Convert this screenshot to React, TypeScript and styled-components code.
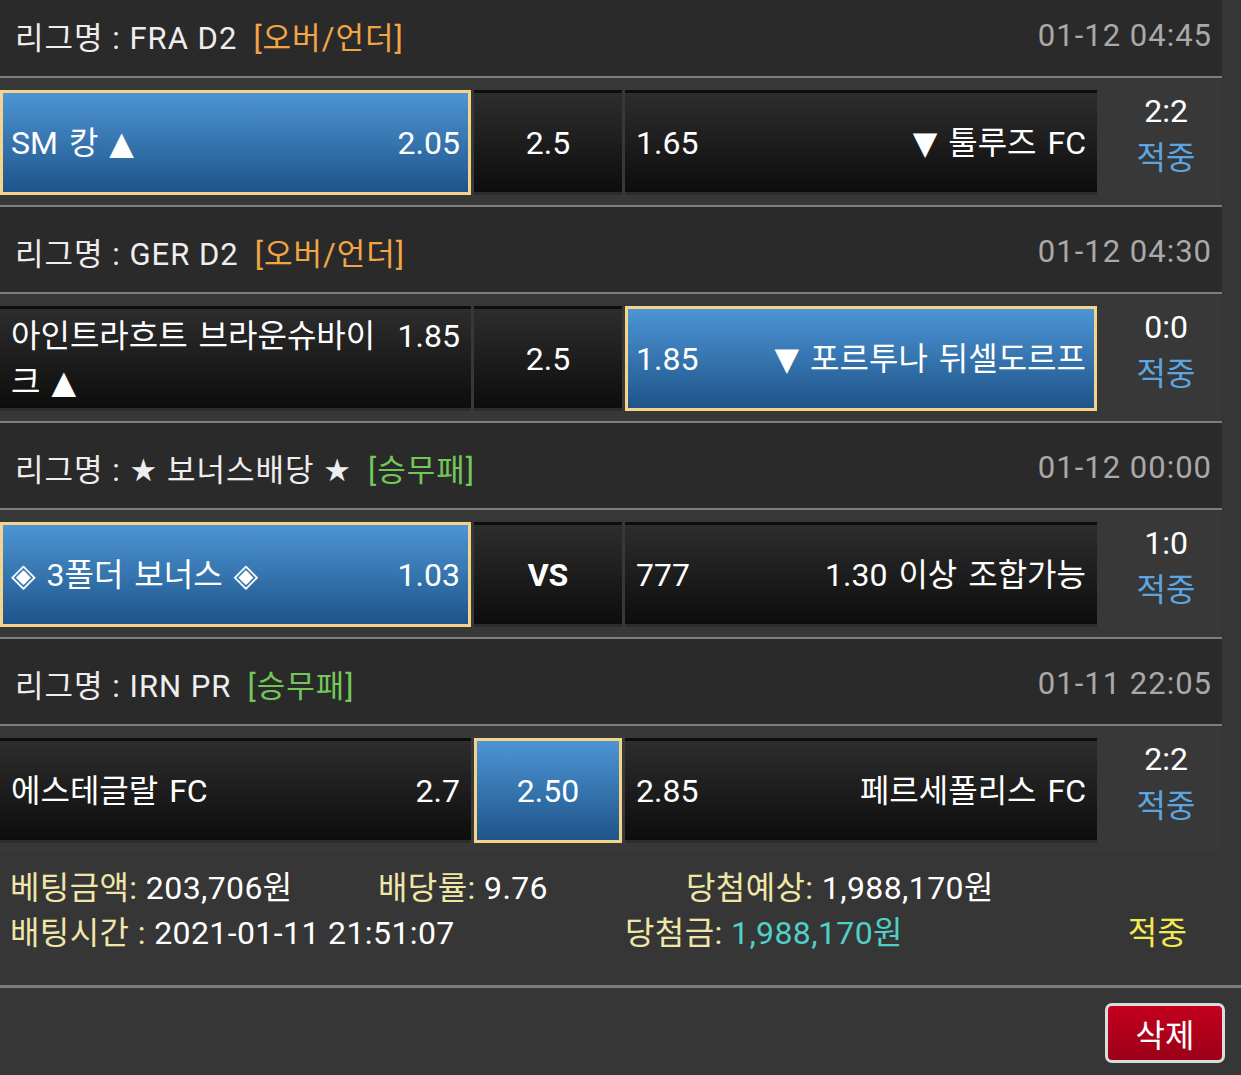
import styled, { createGlobalStyle } from "styled-components";

const FONT = `Roboto, "DejaVu Sans", "Noto Sans CJK KR", sans-serif`;

const GlobalStyle = createGlobalStyle`
  body {
    margin: 0;
    background: #363636;
    font-family: ${FONT};
    color: #fff;
    overflow: hidden;
  }
`;

const Page = styled.div`
  width: 1241px;
  height: 1075px;
  overflow: hidden;
`;

const List = styled.div`
  width: 1222px;
  margin-top: -9px;
`;

const Header = styled.div`
  height: 87px;
  box-sizing: border-box;
  display: flex;
  align-items: center;
  justify-content: space-between;
  padding: 3px 10px 0 15px;
  background: #2a2a2a;
  border-bottom: 2px solid #7d7d7d;
  font-size: 31px;
  letter-spacing: 1px;
`;

const League = styled.div`
  color: #eee;
`;

const Tag = styled.span<{ $color: string }>`
  margin-left: 16px;
  color: ${(p) => p.$color};
`;

const When = styled.div`
  color: #a9a9a9;
`;

const MatchRow = styled.div<{ $last?: boolean }>`
  display: grid;
  grid-template-columns: 471px 148px 472px 1fr;
  column-gap: 3px;
  padding: 12px 0 10px;
  background: #383838;
  border-bottom: ${(p) => (p.$last ? "none" : "2px solid #7d7d7d")};
`;

const Cell = styled.div<{ $on?: boolean }>`
  height: 105px;
  box-sizing: border-box;
  display: flex;
  align-items: center;
  justify-content: center;
  padding: 0 8px;
  border: 3px solid ${(p) => (p.$on ? "#f3d48a" : "transparent")};
  background: ${(p) =>
    p.$on
      ? "linear-gradient(#4d95d5, #1e5489)"
      : "linear-gradient(#2d2d2d, #0d0d0d)"};
  font-size: 32px;
  line-height: 46px;
`;

const Line = styled.div`
  width: 100%;
  display: flex;
  align-items: flex-start;
  justify-content: space-between;
`;

const Name = styled.span`
  max-width: 400px;
  word-spacing: 3px;
`;

const Odds = styled.span`
  flex-shrink: 0;
`;

const Center = styled.span<{ $bold?: boolean }>`
  font-weight: ${(p) => (p.$bold ? 700 : 400)};
`;

const Score = styled.div`
  display: flex;
  flex-direction: column;
  align-items: center;
  justify-content: flex-start;
  margin-top: -2px;
  padding-left: 10px;
  font-size: 32px;
  line-height: 47px;
`;

const Hit = styled.span<{ $color: string }>`
  color: ${(p) => p.$color};
`;

const Summary = styled.div`
  padding: 13px 26px 29px 10px;
  border-bottom: 3px solid #7d7d7d;
  font-size: 32px;
  line-height: 45px;
  letter-spacing: 0.4px;
`;

const SumRow = styled.div<{ $cols: string }>`
  display: grid;
  grid-template-columns: ${(p) => p.$cols};
  white-space: nowrap;
`;

const Label = styled.span`
  color: #efe6a8;
`;

const Value = styled.span<{ $color?: string }>`
  color: ${(p) => p.$color ?? "#fff"};
`;

const Verdict = styled.span`
  color: #f3ea4e;
  text-align: center;
`;

const Actions = styled.div`
  display: flex;
  justify-content: flex-end;
  padding: 15px 16px 0 0;
`;

const DeleteButton = styled.button`
  width: 120px;
  height: 60px;
  border: 3px solid #dcdcdc;
  border-radius: 7px;
  background: linear-gradient(#c4001f, #9b0018);
  color: #fff;
  font-family: ${FONT};
  font-size: 32px;
  padding: 0;
`;

type Match = {
  league: string;
  tag: string;
  tagColor: string;
  time: string;
  home: string;
  homeOdds: string;
  mid: string;
  awayOdds: string;
  away: string;
  pick: "home" | "mid" | "away";
  score: string;
};

const ORANGE = "#f2a545";
const GREEN = "#72c75a";

const matches: Match[] = [
  {
    league: "FRA D2",
    tag: "[오버/언더]",
    tagColor: ORANGE,
    time: "01-12 04:45",
    home: "SM 캉 ▲",
    homeOdds: "2.05",
    mid: "2.5",
    awayOdds: "1.65",
    away: "▼ 툴루즈 FC",
    pick: "home",
    score: "2:2",
  },
  {
    league: "GER D2",
    tag: "[오버/언더]",
    tagColor: ORANGE,
    time: "01-12 04:30",
    home: "아인트라흐트 브라운슈바이크 ▲",
    homeOdds: "1.85",
    mid: "2.5",
    awayOdds: "1.85",
    away: "▼ 포르투나 뒤셀도르프",
    pick: "away",
    score: "0:0",
  },
  {
    league: "★ 보너스배당 ★",
    tag: "[승무패]",
    tagColor: GREEN,
    time: "01-12 00:00",
    home: "◈ 3폴더 보너스 ◈",
    homeOdds: "1.03",
    mid: "VS",
    awayOdds: "777",
    away: "1.30 이상 조합가능",
    pick: "home",
    score: "1:0",
  },
  {
    league: "IRN PR",
    tag: "[승무패]",
    tagColor: GREEN,
    time: "01-11 22:05",
    home: "에스테글랄 FC",
    homeOdds: "2.7",
    mid: "2.50",
    awayOdds: "2.85",
    away: "페르세폴리스 FC",
    pick: "mid",
    score: "2:2",
  },
];

export default function App() {
  return (
    <Page>
      <GlobalStyle />
      <List>
        {matches.map((m, i) => (
          <div key={m.league}>
            <Header>
              <League>
                리그명 : {m.league}
                <Tag $color={m.tagColor}>{m.tag}</Tag>
              </League>
              <When>{m.time}</When>
            </Header>
            <MatchRow $last={i === matches.length - 1}>
              <Cell $on={m.pick === "home"}>
                <Line>
                  <Name>{m.home}</Name>
                  <Odds>{m.homeOdds}</Odds>
                </Line>
              </Cell>
              <Cell $on={m.pick === "mid"}>
                <Center $bold={m.mid === "VS"}>{m.mid}</Center>
              </Cell>
              <Cell $on={m.pick === "away"}>
                <Line>
                  <Odds>{m.awayOdds}</Odds>
                  <Name>{m.away}</Name>
                </Line>
              </Cell>
              <Score>
                <span>{m.score}</span>
                <Hit $color="#5ba6e0">적중</Hit>
              </Score>
            </MatchRow>
          </div>
        ))}
      </List>
      <Summary>
        <SumRow $cols="368px 308px 1fr">
          <span>
            <Label>베팅금액:</Label> <Value>203,706원</Value>
          </span>
          <span>
            <Label>배당률:</Label> <Value>9.76</Value>
          </span>
          <span>
            <Label>당첨예상:</Label> <Value>1,988,170원</Value>
          </span>
        </SumRow>
        <SumRow $cols="615px 1fr 115px">
          <span>
            <Label>배팅시간 :</Label> <Value>2021-01-11 21:51:07</Value>
          </span>
          <span>
            <Label>당첨금:</Label> <Value $color="#4fd0c8">1,988,170원</Value>
          </span>
          <Verdict>적중</Verdict>
        </SumRow>
      </Summary>
      <Actions>
        <DeleteButton>삭제</DeleteButton>
      </Actions>
    </Page>
  );
}
